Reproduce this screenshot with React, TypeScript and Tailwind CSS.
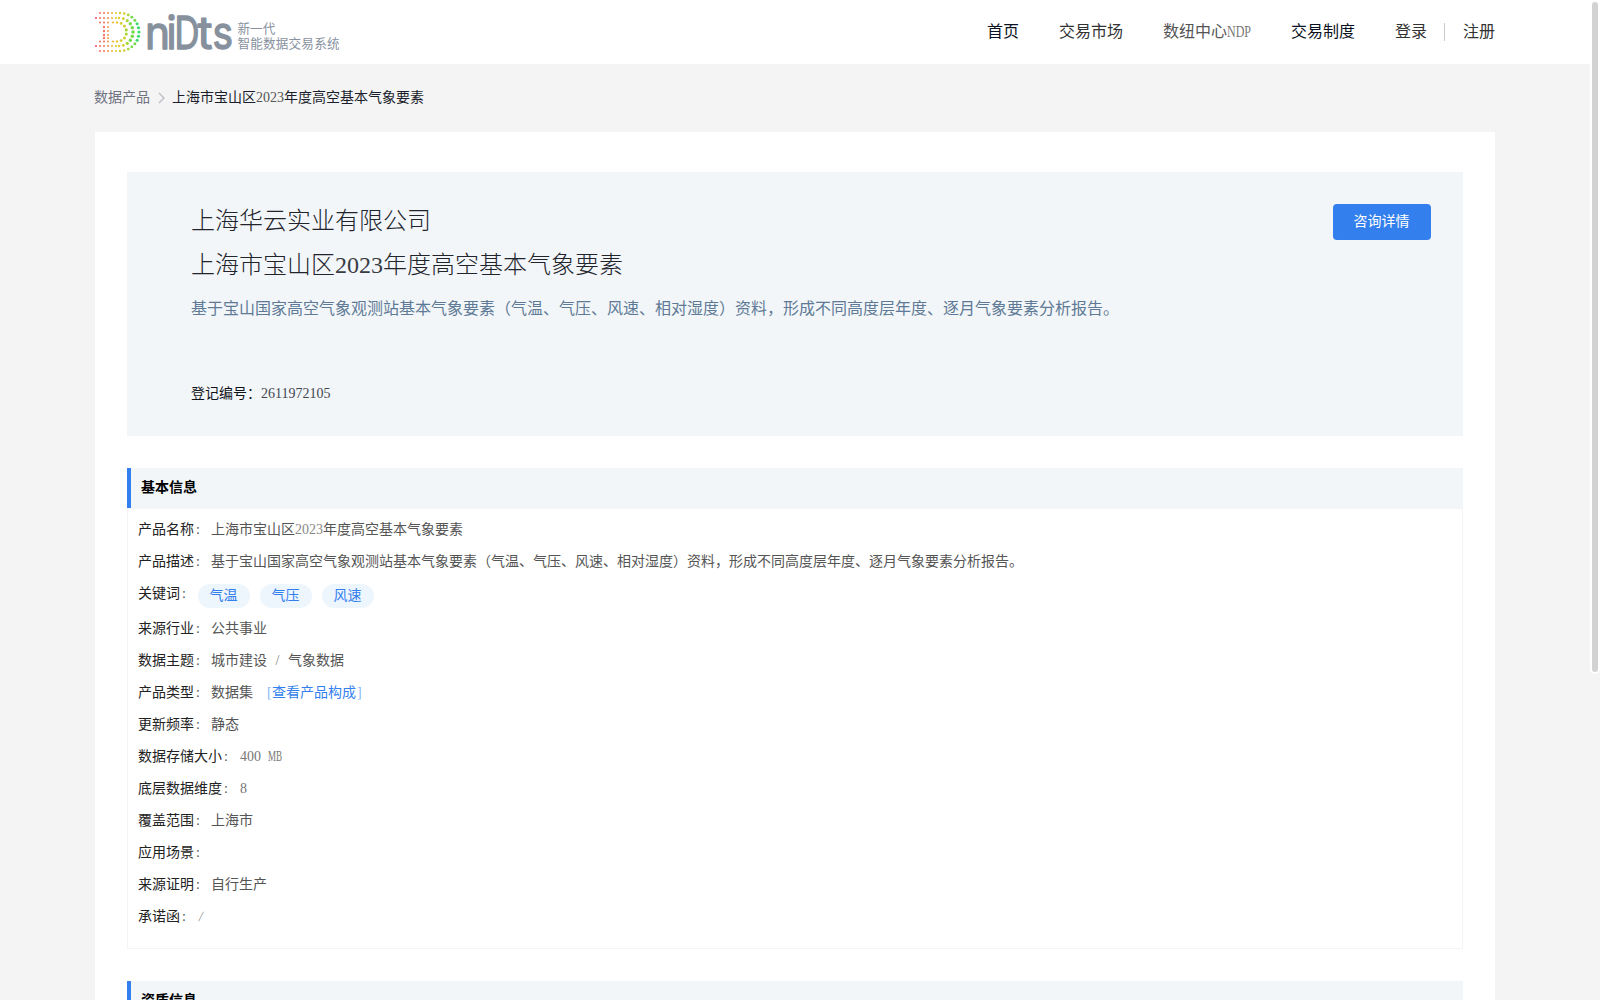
import React from "react";

const nav = [
  { t: "首页", c: "text-[#0b1222]" },
  { t: "交易市场", c: "text-[#333333]" },
  { t: "数纽中心", c: "text-[#555555]", latin: "NDP" },
  { t: "交易制度", c: "text-[#0b1222]" },
];

const desc =
  "基于宝山国家高空气象观测站基本气象要素（气温、气压、风速、相对湿度）资料，形成不同高度层年度、逐月气象要素分析报告。";

const dotColors = ["#f5577d", "#f47a66", "#f29a50", "#efb83e", "#e6cc35", "#d3cf30", "#a9d537", "#74da4c", "#3bdc6c"];

function ringDots(cx: number, r: number, n: number, straight: number[], grow: number) {
  const pts: { x: number; y: number; s: number }[] = [];
  straight.forEach((x) => {
    pts.push({ x, y: 26 - r, s: 1.1 }, { x, y: 26 + r, s: 1.1 });
  });
  for (let i = 0; i < n; i++) {
    const a = -Math.PI / 2 + (Math.PI * i) / (n - 1);
    pts.push({ x: cx + Math.cos(a) * r, y: 26 + Math.sin(a) * r, s: 1.2 + Math.cos(a) * grow });
  }
  return pts;
}

const dots = [
  ...ringDots(25, 19, 15, [5, 9, 13, 17, 21], 0.4),
  ...ringDots(24, 14, 11, [1, 5, 9, 13, 17, 21], 0.6),
  ...ringDots(22, 9.5, 8, [5, 9, 13, 18], 0.4),
  ...[-5, -1, 3, 6].flatMap((d) => [{ x: 9, y: 26 + d, s: 1.2 }, { x: 13, y: 26 + d, s: 1 }]),
];

const letters = [
  { c: "n", x: 50, w: 25 },
  { c: "i", x: 71.5, w: 10 },
  { c: "D", x: 79.5, w: 25 },
  { c: "t", x: 102.5, w: 15 },
  { c: "s", x: 117.5, w: 20.5 },
];

function Logo() {
  return (
    <svg width="246" height="52" viewBox="0 0 246 52" className="mt-1.5 shrink-0">
      {dots.map((d, i) => (
        <circle key={i} cx={d.x} cy={d.y} r={d.s} fill={dotColors[Math.min(8, Math.floor(d.x / 5))]} />
      ))}
      <g fill="#87919e" stroke="#87919e" strokeWidth="1.4" strokeLinejoin="round" fontFamily="Inter, sans-serif" fontSize="45">
        {letters.map((l) => (
          <text key={l.c} x={l.x} y="42.5" textLength={l.w} lengthAdjust="spacingAndGlyphs">{l.c}</text>
        ))}
      </g>
      <g fill="#87919e" fontFamily="'Noto Sans CJK SC', sans-serif" fontWeight="400">
        <text x="142.5" y="26.5" fontSize="12.6">新一代</text>
        <text x="142.5" y="42" fontSize="12.6" textLength="102">智能数据交易系统</text>
      </g>
    </svg>
  );
}

function Row({ label, children }: { label: string; children?: React.ReactNode }) {
  return (
    <div className="flex h-8 items-center whitespace-pre">
      <span className="text-[#222222]">{label}</span>
      <span className="w-[17px] pl-0.5 text-[#555555]">:</span>
      <span className="text-[#555555]">{children}</span>
    </div>
  );
}

function SectionTitle({ children }: { children: React.ReactNode }) {
  return (
    <div className="flex h-10 items-center border-l-4 border-[#347fee] bg-[#f2f6f9] pl-[10px] font-bold text-black">
      {children}
    </div>
  );
}

export default function App() {
  return (
    <div className="relative h-[1000px] w-[1600px] overflow-hidden bg-[#f4f4f4] font-['Liberation_Serif','Noto_Sans_CJK_SC',sans-serif] text-sm font-normal">
      <header className="h-16 bg-white pr-[105px] pl-[95px]">
        <div className="flex h-16 items-start justify-between">
          <Logo />
          <nav className="flex h-16 items-center text-base">
            {nav.map((n) => (
              <a key={n.t} className={"mr-10 flex items-center " + n.c}>
                {n.t}
                {n.latin && (
                  <span className="w-6">
                    <span className="inline-block origin-left scale-x-[0.75] text-[#777777]">{n.latin}</span>
                  </span>
                )}
              </a>
            ))}
            <a className="text-[#333333]">登录</a>
            <span className="mr-[18px] ml-[17px] h-[18px] w-px bg-[#cccccc]" />
            <a className="text-[#333333]">注册</a>
          </nav>
        </div>
      </header>

      <div className="ml-[94px] flex h-[68px] items-center text-[#1a1d2b]">
        <span className="text-[#6f7280]">数据产品</span>
        <svg width="22" height="14" viewBox="0 0 22 14" fill="none" stroke="#b8bbc2" strokeWidth="1.2">
          <path d="M9 2l5 5-5 5" />
        </svg>
        <span>上海市宝山区<span className="text-[#555555]">2023</span>年度高空基本气象要素</span>
      </div>

      <main className="ml-[95px] h-[900px] w-[1400px] bg-white px-8 pt-10">
        <section className="flex h-[264px] items-start justify-between bg-[#f2f6f9] py-8 pr-8 pl-[63px]">
          <div className="text-[#22242c]">
            <h1 className="h-[44px] pl-px text-2xl leading-[34px] font-light">上海华云实业有限公司</h1>
            <h2 className="h-[44px] pl-px text-2xl leading-[34px] font-light">上海市宝山区<span className="text-[#3a3c44]">2023</span>年度高空基本气象要素</h2>
            <p className="h-[92px] pt-px pl-px text-base leading-8 text-[#5f7a96]">{desc}</p>
            <p className="pl-px leading-5 text-[#111319]">登记编号：<span className="text-[#44474f]">2611972105</span></p>
          </div>
          <button className="h-9 w-[98px] rounded bg-[#347fee] pr-px text-white">咨询详情</button>
        </section>

        <section className="mt-8">
          <SectionTitle>基本信息</SectionTitle>
          <div className="h-[441px] border border-[#f4f4f8] pt-[5px] pl-[10px]">
            <Row label="产品名称">上海市宝山区<span className="text-[#888888]">2023</span>年度高空基本气象要素</Row>
            <Row label="产品描述">{desc}</Row>
            <div className="flex h-[35px] items-start leading-8">
              <span className="text-[#222222]">关键词</span>
              <span className="w-[18px] pl-0.5 text-[#555555]">:</span>
              <div className="mt-[6px] flex gap-[10px] leading-6 text-[#347fee]">
                {["气温", "气压", "风速"].map((t) => (
                  <span key={t} className="h-6 w-[52px] rounded-full bg-[#edf5fd] pr-px text-center">{t}</span>
                ))}
              </div>
            </div>
            <Row label="来源行业">公共事业</Row>
            <Row label="数据主题">城市建设<span className="inline-block w-[21px] text-center text-[#888888]">/</span>气象数据</Row>
            <Row label="产品类型">数据集<span className="ml-[14px] text-[#347fee]"><span className="inline-block w-[5px] text-[#8ab5f5]">[</span>查看产品构成<span className="pl-px text-[#8ab5f5]">]</span></span></Row>
            <Row label="更新频率">静态</Row>
            <Row label="数据存储大小"><span className="pl-px text-[#777777]">400<span className="inline-block w-[7px]" /><span className="inline-block origin-left scale-x-[0.65]">MB</span></span></Row>
            <Row label="底层数据维度"><span className="pl-px text-[#777777]">8</span></Row>
            <Row label="覆盖范围">上海市</Row>
            <Row label="应用场景" />
            <Row label="来源证明">自行生产</Row>
            <Row label="承诺函"><span className="inline-block skew-x-[-10deg] pl-0.5 text-[#888888]">/</span></Row>
          </div>
        </section>

        <section className="mt-8">
          <SectionTitle>资质信息</SectionTitle>
        </section>
      </main>

      <div className="absolute top-0 right-0 h-[674px] w-[10px] rounded-full border-2 border-white bg-[#d2d2d2]" />
    </div>
  );
}
